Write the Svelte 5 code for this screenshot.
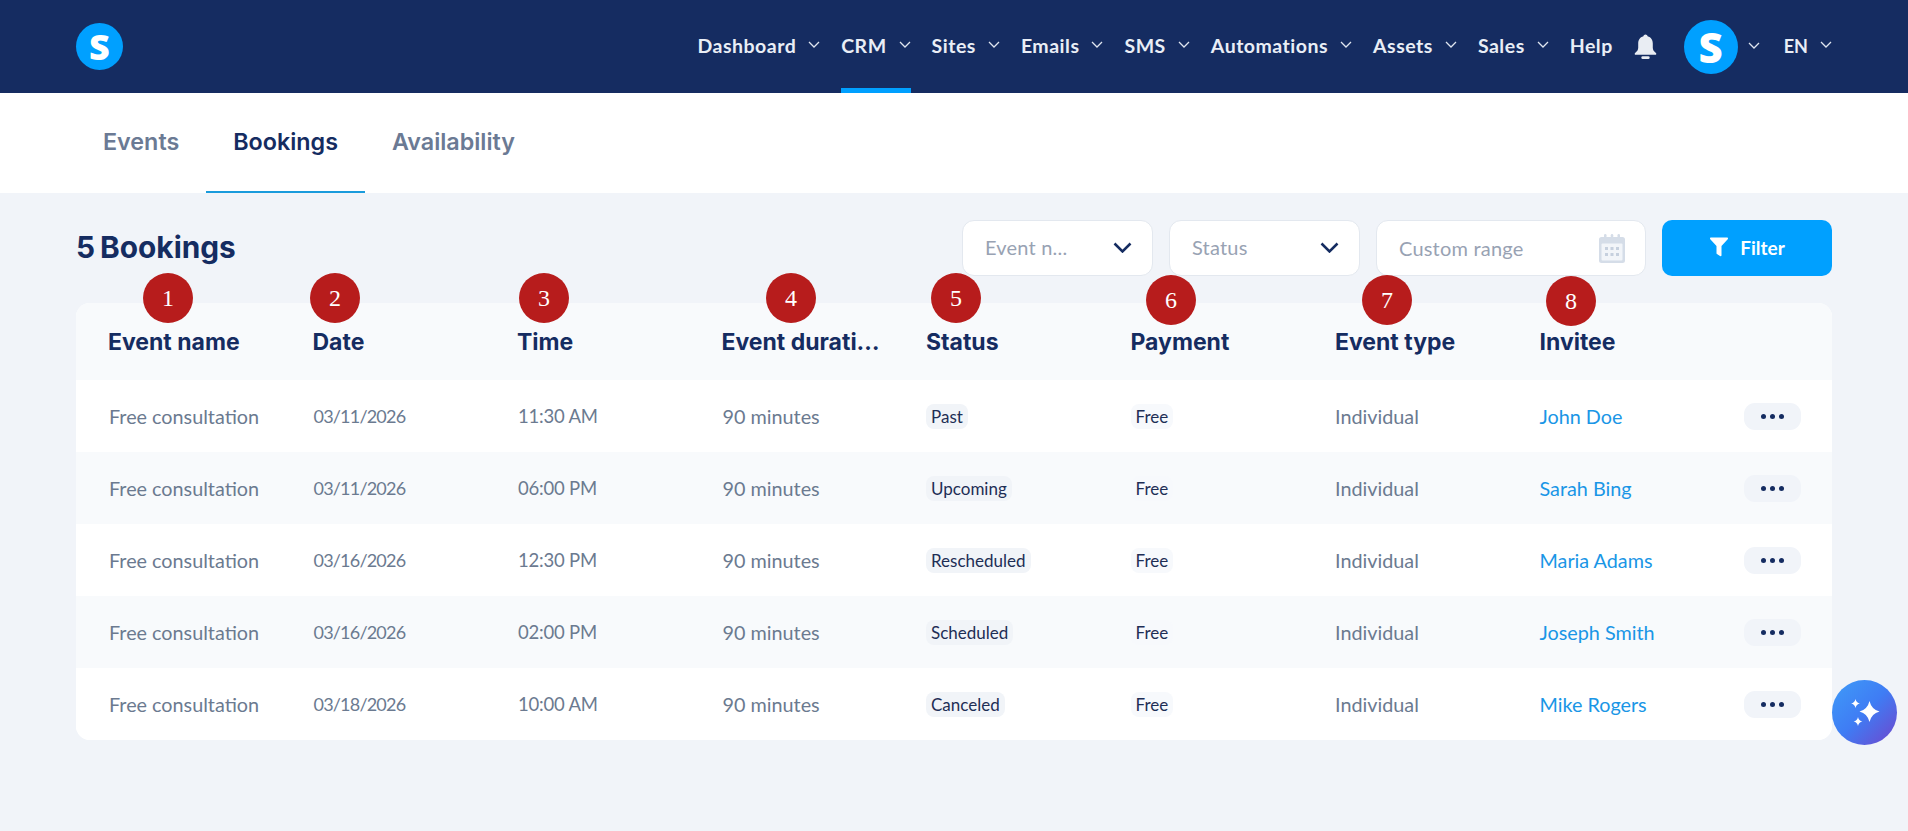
<script>
  const navItems = [
    { label: 'Dashboard', menu: true },
    { label: 'CRM', menu: true, active: true },
    { label: 'Sites', menu: true },
    { label: 'Emails', menu: true },
    { label: 'SMS', menu: true },
    { label: 'Automations', menu: true },
    { label: 'Assets', menu: true },
    { label: 'Sales', menu: true },
    { label: 'Help', menu: false }
  ];
  const columns = ['Event name', 'Date', 'Time', 'Event durati…', 'Status', 'Payment', 'Event type', 'Invitee'];
  const bookings = [
    { date: '03/11/2026', time: '11:30 AM', status: 'Past', invitee: 'John Doe' },
    { date: '03/11/2026', time: '06:00 PM', status: 'Upcoming', invitee: 'Sarah Bing' },
    { date: '03/16/2026', time: '12:30 PM', status: 'Rescheduled', invitee: 'Maria Adams' },
    { date: '03/16/2026', time: '02:00 PM', status: 'Scheduled', invitee: 'Joseph Smith' },
    { date: '03/18/2026', time: '10:00 AM', status: 'Canceled', invitee: 'Mike Rogers' }
  ];
  const markers = [
    { n: 1, x: 168, y: 298 },
    { n: 2, x: 335, y: 298 },
    { n: 3, x: 544, y: 298 },
    { n: 4, x: 791, y: 298 },
    { n: 5, x: 956, y: 298 },
    { n: 6, x: 1171, y: 300 },
    { n: 7, x: 1387, y: 300 },
    { n: 8, x: 1571, y: 301 }
  ];
</script>

<div class="page">
  <header class="topbar">
    <div class="logo">S</div>
    <nav class="nav">
      {#each navItems as item}
        <div class="nav-item" class:active={item.active}>
          <span>{item.label}</span>
          {#if item.menu}
            <svg class="caret" viewBox="0 0 12 7" width="12" height="7"><path d="M1 1l5 5 5-5" /></svg>
          {/if}
        </div>
      {/each}
      <svg class="bell" viewBox="0 0 22 24" width="23" height="25">
        <path d="M11 0.500c1 0 1.800.7 2 1.700 3.400.8 5 3.600 5 7v4c0 2.200 1.200 3.600 3 5 .7.600.4 1.800-.6 1.800H1.600c-1 0-1.300-1.200-.6-1.800 1.800-1.400 3-2.800 3-5v-4c0-3.400 1.600-6.200 5-7 .2-1 1-1.700 2-1.700z" />
        <rect x="7" y="21.300" width="8" height="2.700" rx="1.300" />
      </svg>
      <div class="avatar">S</div>
      <svg class="caret avatar-caret" viewBox="0 0 12 7" width="12" height="7"><path d="M1 1l5 5 5-5" /></svg>
      <div class="nav-item lang">
        <span>EN</span>
        <svg class="caret" viewBox="0 0 12 7" width="12" height="7"><path d="M1 1l5 5 5-5" /></svg>
      </div>
    </nav>
  </header>

  <div class="tabs">
    <div class="tab">Events</div>
    <div class="tab current">Bookings</div>
    <div class="tab">Availability</div>
  </div>

  <main class="content">
    <div class="toolbar">
      <h1>5 Bookings</h1>
      <div class="filters">
        <div class="select">
          <span>Event n...</span>
          <svg viewBox="0 0 19 11" width="19" height="11"><path d="M1.500 1.500l8 8 8-8" /></svg>
        </div>
        <div class="select">
          <span>Status</span>
          <svg viewBox="0 0 19 11" width="19" height="11"><path d="M1.500 1.500l8 8 8-8" /></svg>
        </div>
        <div class="select range">
          <span>Custom range</span>
          <svg class="cal" viewBox="0 0 26 29" width="26" height="29">
            <path d="M2.500 3h21A2.500 2.500 0 0 1 26 5.500v21a2.500 2.500 0 0 1-2.500 2.500h-21A2.500 2.500 0 0 1 0 26.500v-21A2.500 2.500 0 0 1 2.500 3z" fill="#d5dde8" />
            <rect x="2.500" y="9.500" width="21" height="17" rx="1" fill="#f2f5f9" />
            <rect x="5" y="0" width="2.500" height="6" rx="1.200" fill="#d5dde8" />
            <rect x="11.750" y="0" width="2.500" height="6" rx="1.200" fill="#d5dde8" />
            <rect x="18.500" y="0" width="2.500" height="6" rx="1.200" fill="#d5dde8" />
            <g fill="#c6d0de">
              <rect x="6" y="13" width="3" height="3" /><rect x="11.500" y="13" width="3" height="3" /><rect x="17" y="13" width="3" height="3" />
              <rect x="6" y="19" width="3" height="3" /><rect x="11.500" y="19" width="3" height="3" /><rect x="17" y="19" width="3" height="3" />
            </g>
          </svg>
        </div>
        <button class="filter-btn">
          <svg viewBox="0 0 20 20" width="20" height="20"><path d="M1 1.500c0-.6.400-1 1-1h16c.6 0 1 .4 1 1 0 .3-.1.500-.3.700L12.500 9v9.300c0 .8-.9 1.200-1.500.8l-3-2c-.3-.2-.5-.5-.5-.8V9L1.300 2.200C1.100 2 1 1.800 1 1.500z" /></svg>
          <span>Filter</span>
        </button>
      </div>
    </div>

    <section class="table">
      <div class="row head">
        {#each columns as col}
          <div>{col}</div>
        {/each}
      </div>
      {#each bookings as b}
        <div class="row body">
          <div class="nudge">Free consultation</div>
          <div class="nudge num">{b.date}</div>
          <div class="nudge time">{b.time}</div>
          <div class="nudge">90 minutes</div>
          <div><span class="badge">{b.status}</span></div>
          <div><span class="badge pale">Free</span></div>
          <div>Individual</div>
          <div class="link">{b.invitee}</div>
          <div class="actions">
            <button class="more" aria-label="More"><i></i><i></i><i></i></button>
          </div>
        </div>
      {/each}
    </section>
  </main>

  <div class="ai">
    <svg viewBox="0 0 32 32" width="32" height="32">
      <path d="M20.500 4Q22.500 12.500 30.500 14.500 22.500 16.500 20.500 25 18.500 16.500 10.500 14.500 18.500 12.500 20.500 4z" />
      <path d="M6.500 2Q7.300 5.700 10.900 6.500 7.300 7.300 6.500 11 5.700 7.300 2.100 6.500 5.700 5.700 6.500 2z" />
      <path d="M9 20Q9.800 23.700 13.400 24.500 9.800 25.300 9 29 8.200 25.300 4.600 24.500 8.200 23.700 9 20z" />
    </svg>
  </div>

  {#each markers as m}
    <div class="marker" style="left:{m.x - 25}px;top:{m.y - 25}px">{m.n}</div>
  {/each}
</div>

<style>
  :global(body) {
    margin: 0;
    background: #f1f4f9;
  }
  .page {
    position: relative;
    height: 831px;
    overflow: hidden;
    background: #f1f4f9;
    font-family: "Lato", "Noto Sans", sans-serif;
    color: #152c61;
  }
  .topbar {
    height: 93px;
    box-sizing: border-box;
    padding: 0 76px;
    background: #152c61;
    display: flex;
    align-items: center;
    justify-content: space-between;
  }
  .logo {
    width: 47px;
    height: 47px;
    border-radius: 50%;
    background: #00a0ff;
    color: #fff;
    font: 800 36px/47px "Open Sans", sans-serif;
    text-align: center;
    flex: none;
  }
  .nav {
    display: flex;
    align-items: center;
    height: 93px;
    color: #e9eef6;
    font-weight: 700;
    font-size: 19.500px;
    letter-spacing: 0.5px;
  }
  .nav-item {
    position: relative;
    height: 93px;
    box-sizing: border-box;
    padding-bottom: 2px;
    display: flex;
    align-items: center;
    gap: 12px;
    margin-right: 21px;
  }
  .nav-item.active::after {
    content: "";
    position: absolute;
    left: 0;
    right: 0;
    bottom: 0;
    height: 5px;
    background: #00a0ff;
  }
  .caret {
    flex: none;
    margin-bottom: 2px;
  }
  .caret path {
    fill: none;
    stroke: #dfe6f0;
    stroke-width: 1.300;
  }
  .bell {
    fill: #e9edf3;
    flex: none;
    margin-right: 27px;
  }
  .avatar {
    width: 54px;
    height: 54px;
    border-radius: 50%;
    background: #00a0ff;
    color: #fff;
    font: 800 42px/54px "Open Sans", sans-serif;
    text-align: center;
    flex: none;
    margin-right: 10px;
  }
  .avatar-caret {
    margin-right: 24px;
  }
  .lang {
    margin-right: 0;
    font-size: 18px;
    letter-spacing: 0;
  }
  .tabs {
    height: 100px;
    background: #fff;
    display: flex;
    padding-left: 76px;
    box-sizing: border-box;
    font-family: "Inter", sans-serif;
    font-weight: 600;
    font-size: 23.300px;
    color: #6b7a94;
  }
  .tab {
    display: flex;
    align-items: center;
    padding: 0 27px 4px;
    height: 100px;
    box-sizing: border-box;
  }
  .tab.current {
    color: #152c61;
    padding-bottom: 2px;
    border-bottom: 2px solid #1a9bdc;
  }
  .content {
    padding: 27px 76px 0;
  }
  .toolbar {
    display: flex;
    justify-content: space-between;
    align-items: center;
    height: 56px;
  }
  h1 {
    margin: 0;
    font: 700 29.800px/1 "Inter", sans-serif;
    word-spacing: -2px;
    color: #152c61;
  }
  .filters {
    display: flex;
    gap: 16px;
    height: 56px;
  }
  .select {
    width: 191px;
    height: 56px;
    box-sizing: border-box;
    background: #fff;
    border: 1px solid #e3e8ef;
    border-radius: 12px;
    padding: 0 20px 2px 22px;
    display: flex;
    align-items: center;
    justify-content: space-between;
    color: #98a2b3;
    font-size: 20px;
    letter-spacing: 0.2px;
  }
  .range {
    width: 270px;
    padding-bottom: 0;
  }
  .select svg path {
    fill: none;
    stroke: #152c61;
    stroke-width: 2.500;
  }
  .cal path {
    stroke: none !important;
    fill: #d5dde8 !important;
  }
  .filter-btn {
    width: 170px;
    height: 56px;
    padding: 0 0 2px;
    border: 0;
    border-radius: 10px;
    background: #00a0ff;
    color: #fff;
    font: 700 19px "Lato", sans-serif;
    display: flex;
    align-items: center;
    justify-content: center;
    gap: 11px;
  }
  .filter-btn svg {
    fill: #fff;
  }
  .table {
    margin-top: 27px;
    border-radius: 14px;
    overflow: hidden;
    background: #fff;
  }
  .row {
    display: grid;
    grid-template-columns: repeat(8, 204.500px) 1fr;
    padding: 0 35px 0 32px;
    align-items: center;
    font-size: 19.800px;
    color: #6b7a90;
  }
  .head {
    height: 77px;
    background: #f8fafc;
    font: 700 23px "Inter", sans-serif;
    color: #152c61;
  }
  .body {
    height: 72px;
    background: #fff;
  }
  .body:nth-child(odd) {
    background: #f8fafc;
  }
  .nudge {
    padding-left: 1px;
  }
  .num {
    font-size: 18px;
    letter-spacing: -0.800px;
  }
  .time {
    font-size: 18.500px;
    letter-spacing: -0.200px;
  }
  .badge {
    display: inline-block;
    background: #f1f4f8;
    color: #1e2e55;
    font-size: 17px;
    line-height: 25px;
    padding: 0 5px;
    border-radius: 8px;
  }
  .badge.pale {
    background: #f7f9fc;
  }
  .link {
    color: #1a96e6;
  }
  .actions {
    display: flex;
    justify-content: flex-end;
  }
  .more {
    width: 57px;
    height: 27px;
    border: 0;
    padding: 0;
    border-radius: 11px;
    background: #f1f4f9;
    display: flex;
    align-items: center;
    justify-content: center;
    gap: 4px;
  }
  .more i {
    width: 5px;
    height: 5px;
    border-radius: 50%;
    background: #152c61;
  }
  .ai {
    position: absolute;
    left: 1832px;
    top: 680px;
    width: 65px;
    height: 65px;
    border-radius: 50%;
    background: linear-gradient(135deg, #3f9cf8 0%, #3f7cf4 50%, #7046cc 100%);
    display: flex;
    align-items: center;
    justify-content: center;
  }
  .ai svg {
    fill: #fff;
  }
  .marker {
    position: absolute;
    width: 50px;
    height: 50px;
    border-radius: 50%;
    background: #b71c1c;
    color: #fff;
    font: 400 24px/50px "Liberation Serif", serif;
    text-align: center;
  }
</style>
